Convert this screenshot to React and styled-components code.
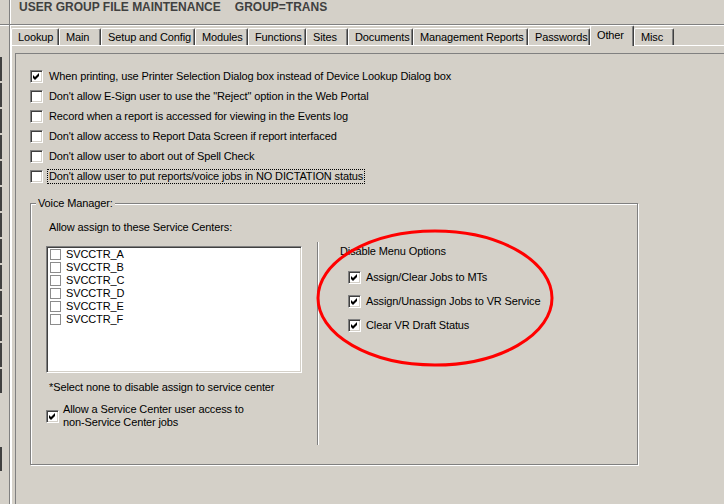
import React from 'react';
import styled, { createGlobalStyle } from 'styled-components';

const Global = createGlobalStyle`
  html, body { margin: 0; padding: 0; background: #d4d0c8; }
  body {
    font-family: "Liberation Sans", Arial, sans-serif;
    font-size: 11px;
    letter-spacing: -0.12px;
    color: #000;
  }
  fieldset, legend { font: inherit; }
`;

const Screen = styled.div`
  position: relative;
  width: 724px;
  height: 504px;
  overflow: hidden;
  display: flex;
  background: #d4d0c8;
`;

const LeftStrip = styled.div`
  flex: none;
  width: 9px;
  border-right: 1px solid #808080;
  box-shadow: 1px 0 0 #fff;
  display: flex;
  flex-direction: column;
  gap: 2px;
`;

const StripHead = styled.div`
  flex: none;
  height: 24px;
  border-bottom: 1px solid #808080;
  box-shadow: 0 1px 0 #fff;
  margin-bottom: 30px;
`;

const StripMark = styled.div`
  flex: none;
  width: 2px;
  height: 24px;
  background: #404040;
  margin-top: ${p => p.$gap || 0}px;
`;

const Main = styled.div`
  flex: 1;
  display: flex;
  flex-direction: column;
  min-width: 0;
`;

const TitleBar = styled.div`
  flex: none;
  height: 24px;
  border-bottom: 1px solid #808080;
  box-shadow: 0 1px 0 #fff;
  display: flex;
  gap: 14px;
  padding-left: 9px;
  font-weight: bold;
  font-size: 12px;
  letter-spacing: 0;
  line-height: 15px;
  color: #404040;
`;

const TabStrip = styled.div`
  flex: none;
  height: 20px;
  display: flex;
  align-items: flex-end;
  padding-left: 1px;
  position: relative;
  z-index: 1;
`;

const Tab = styled.div`
  flex: none;
  box-sizing: border-box;
  width: ${p => p.$w}px;
  height: ${p => (p.$active ? 21 : 17)}px;
  margin-bottom: ${p => (p.$active ? -1 : 0)}px;
  background: #d4d0c8;
  border-top: 1px solid #fff;
  border-left: 1px solid #fff;
  border-right: 1px solid #404040;
  box-shadow: inset -1px 0 0 #808080;
  border-top-left-radius: 2px;
  border-top-right-radius: 2px;
  display: flex;
  align-items: center;
  padding-left: 6px;
  padding-bottom: ${p => (p.$active ? 2 : 0)}px;
  white-space: nowrap;
`;

const Panel = styled.div`
  flex: 1;
  margin-left: 1px;
  border-top: 1px solid #fff;
  border-left: 1px solid #fff;
  padding: 7px 0 0 3px;
  display: flex;
  flex-direction: column;
`;

const Frame = styled.div`
  flex: 1;
  border-top: 1px solid #808080;
  border-left: 1px solid #808080;
  padding: 12px 0 0 14px;
  display: flex;
  flex-direction: column;
  align-items: flex-start;
`;

const OptionRow = styled.div`
  height: 20px;
  display: flex;
  align-items: center;
  gap: 4px;
`;

const Label = styled.span`
  padding: 0 1px;
  line-height: 13px;
  border: 1px dotted ${p => (p.$focus ? '#000' : 'transparent')};
  white-space: nowrap;
`;

const CheckBox = styled.span`
  flex: none;
  box-sizing: border-box;
  width: 13px;
  height: 13px;
  background: #fff;
  border-top: 1px solid #808080;
  border-left: 1px solid #808080;
  border-right: 1px solid #fff;
  border-bottom: 1px solid #fff;
  box-shadow: inset 1px 1px 0 #404040, inset -1px -1px 0 #d4d0c8;
  display: flex;
  align-items: center;
  justify-content: center;
`;

const Check = ({ on }) => (
  <CheckBox>
    {on && (
      <svg width="9" height="9" viewBox="0 0 9 9">
        <path d="M1 3 L3 5 L7 1 L7 4 L3 8 L1 6 Z" fill="#000" />
      </svg>
    )}
  </CheckBox>
);

const GroupBox = styled.fieldset`
  margin: 11px 0 0 0;
  padding: 0;
  box-sizing: border-box;
  width: 608px;
  min-width: 0;
  border: 1px solid #808080;
  box-shadow: inset 1px 1px 0 #fff, 1px 1px 0 #fff;
  display: flex;
`;

const Legend = styled.legend`
  margin-left: 5px;
  padding: 0 2px;
  line-height: 13px;
  background: #d4d0c8;
`;

const LeftCol = styled.div`
  flex: none;
  width: 286px;
  padding: 11px 0 0 15px;
  box-sizing: border-box;
  display: flex;
  flex-direction: column;
  align-items: flex-start;
`;

const Caption = styled.div`
  line-height: 13px;
  padding-left: ${p => (p.$flush ? 0 : 3)}px;
  margin-top: ${p => p.$mt || 0}px;
  white-space: nowrap;
`;

const ListBox = styled.div`
  box-sizing: border-box;
  width: 256px;
  height: 127px;
  margin-top: 12px;
  background: #fff;
  border-top: 1px solid #808080;
  border-left: 1px solid #808080;
  border-right: 1px solid #fff;
  border-bottom: 1px solid #fff;
  box-shadow: inset 1px 1px 0 #404040, inset -1px -1px 0 #d4d0c8;
  padding: 1px 0 0 3px;
  display: flex;
  flex-direction: column;
`;

const ListItem = styled.div`
  height: 13px;
  display: flex;
  align-items: center;
  gap: 5px;
  line-height: 13px;
`;

const FlatBox = styled.span`
  flex: none;
  box-sizing: border-box;
  width: 11px;
  height: 11px;
  border: 1px solid #8c8c8c;
  background: #fff;
`;

const AccessRow = styled.div`
  display: flex;
  align-items: center;
  gap: 4px;
  margin-top: 9px;
`;

const MultiLabel = styled.div`
  line-height: 13px;
`;

const Divider = styled.div`
  flex: none;
  width: 1px;
  height: 203px;
  margin: 32px 0 19px 0;
  background: #808080;
  box-shadow: 1px 0 0 #fff;
`;

const RightCol = styled.div`
  flex: 1;
  padding: 35px 0 0 22px;
  display: flex;
  flex-direction: column;
  align-items: flex-start;
`;

const MenuList = styled.div`
  margin-top: 7px;
  padding-left: 8px;
  display: flex;
  flex-direction: column;
`;

const MenuRow = styled.div`
  height: 24px;
  display: flex;
  align-items: center;
  gap: 5px;
  white-space: nowrap;
`;

const Annotation = styled.svg`
  position: absolute;
  left: 315px;
  top: 229px;
  pointer-events: none;
`;

const tabs = [
  ['Lookup', 48],
  ['Main', 42],
  ['Setup and Config', 94],
  ['Modules', 53],
  ['Functions', 58],
  ['Sites', 42],
  ['Documents', 65],
  ['Management Reports', 115],
  ['Passwords', 62],
  ['Other', 44],
  ['Misc', 40],
];

const options = [
  ['When printing, use Printer Selection Dialog box instead of Device Lookup Dialog box', true],
  ["Don't allow E-Sign user to use the \"Reject\" option in the Web Portal", false],
  ['Record when a report is accessed for viewing in the Events log', false],
  ["Don't allow access to Report Data Screen if report interfaced", false],
  ["Don't allow user to abort out of Spell Check", false],
  ["Don't allow user to put reports/voice jobs in NO DICTATION status", false, true],
];

const centers = ['SVCCTR_A', 'SVCCTR_B', 'SVCCTR_C', 'SVCCTR_D', 'SVCCTR_E', 'SVCCTR_F'];

const menuOptions = ['Assign/Clear Jobs to MTs', 'Assign/Unassign Jobs to VR Service', 'Clear VR Draft Status'];

export default function App() {
  const marks = Array.from({ length: 13 }, (_, i) => i);
  return (
    <>
      <Global />
      <Screen>
        <LeftStrip>
          <StripHead />
          {marks.map(i => <StripMark key={i} />)}
          <StripMark $gap={52} />
        </LeftStrip>
        <Main>
          <TitleBar>
            <span>USER GROUP FILE MAINTENANCE</span>
            <span>GROUP=TRANS</span>
          </TitleBar>
          <TabStrip>
            {tabs.map(([name, w]) => (
              <Tab key={name} $w={w} $active={name === 'Other'}>{name}</Tab>
            ))}
          </TabStrip>
          <Panel>
            <Frame>
              {options.map(([text, on, focus]) => (
                <OptionRow key={text}>
                  <Check on={on} />
                  <Label $focus={focus}>{text}</Label>
                </OptionRow>
              ))}
              <GroupBox>
                <Legend>Voice Manager:</Legend>
                <LeftCol>
                  <Caption>Allow assign to these Service Centers:</Caption>
                  <ListBox>
                    {centers.map(c => (
                      <ListItem key={c}>
                        <FlatBox />
                        <span>{c}</span>
                      </ListItem>
                    ))}
                  </ListBox>
                  <Caption $mt={8}>*Select none to disable assign to service center</Caption>
                  <AccessRow>
                    <Check on />
                    <MultiLabel>
                      Allow a Service Center user access to
                      <br />
                      non-Service Center jobs
                    </MultiLabel>
                  </AccessRow>
                </LeftCol>
                <Divider />
                <RightCol>
                  <Caption $flush>Disable Menu Options</Caption>
                  <MenuList>
                    {menuOptions.map(m => (
                      <MenuRow key={m}>
                        <Check on />
                        <span>{m}</span>
                      </MenuRow>
                    ))}
                  </MenuList>
                </RightCol>
              </GroupBox>
            </Frame>
          </Panel>
        </Main>
        <Annotation width="240" height="140" viewBox="0 0 240 140">
          <ellipse cx="120" cy="69" rx="117" ry="67" fill="none" stroke="#ff0000" strokeWidth="3" />
        </Annotation>
      </Screen>
    </>
  );
}
